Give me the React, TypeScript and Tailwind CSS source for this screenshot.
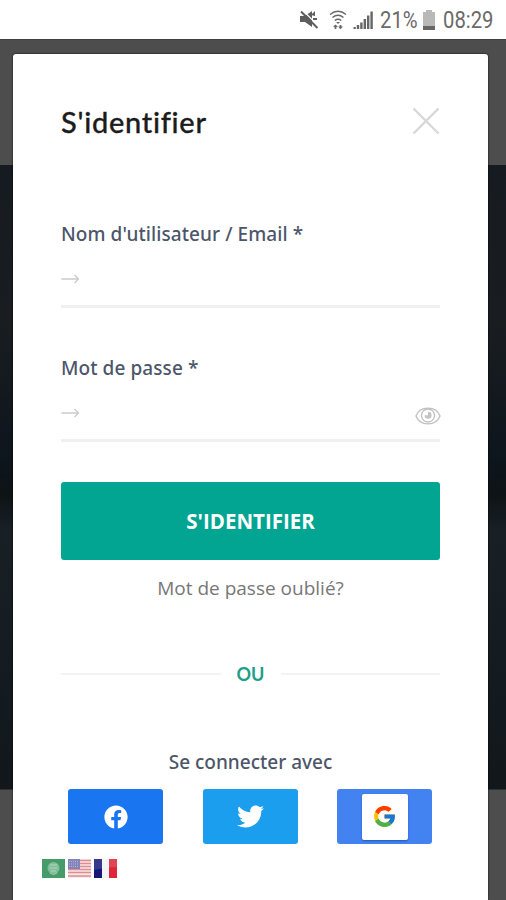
import type { ReactNode } from 'react'
import { FaFacebook, FaTwitter } from 'react-icons/fa'
import { FcGoogle } from 'react-icons/fc'

function StatusBar() {
  return (
    <header className="flex h-[39px] shrink-0 items-center justify-end bg-white pr-[11px] text-[#6a6a6a]">
      <svg width="20" height="20" viewBox="0 0 20 20" className="mr-[10px]" fill="#5e5e5e">
        <path d="M1 6h5l7-5v16l-7-5H1z" />
        <path d="M12 5l4-4v5zM14 8h4v2h-4z" />
        <path d="M4 0.500l16 16" stroke="#fff" strokeWidth="1.2" />
        <path d="M2 1.500l16.500 16.500" stroke="#5e5e5e" strokeWidth="2" />
      </svg>
      <svg width="18" height="20" viewBox="0 0 18 20" className="mr-[6px]" fill="none" stroke="#686868" strokeWidth="1.5">
        <path d="M1 4.500q8-6.500 16 0M3.500 7.500q5.500-4.500 11 0M5.800 10.500q3.200-2.600 6.400 0" />
        <path d="M7 12h4l-2 2z" fill="#686868" stroke="none" />
        <path d="M6.500 19v-3.500M11.500 15v3.500" strokeWidth="1.8" />
        <path d="M4 17l2.500-2.500L9 17zM9 16.500l2.500 2.500 2.500-2.500z" fill="#686868" stroke="none" />
      </svg>
      <svg width="20" height="20" viewBox="0 0 20 20" className="mr-[7px]" fill="#666">
        <path d="M0.500 17h2.300v2H0.500zM3.800 15h2.400v4H3.800zM7.200 12.500h2.400V19H7.200zM10.600 9h2.400v10h-2.400zM14 5.500h2.400V19H14zM17.400 1.500h2.400V19h-2.400z" />
      </svg>
      <span className="w-[38px] origin-left scale-x-[0.88] whitespace-nowrap pt-[2px] font-[Roboto,sans-serif] text-[23px] leading-none">21%</span>
      <svg width="12" height="20" viewBox="0 0 12 20" className="ml-[5px] mr-[8px]">
        <path d="M3 0h6v2h3v18H0V2h3z" fill="#b9b9b9" />
        <path d="M0 16h12v4H0z" fill="#666" />
      </svg>
      <span className="w-[52px] origin-left scale-x-[0.88] whitespace-nowrap pt-[2px] font-[Roboto,sans-serif] text-[23px] leading-none">08:29</span>
    </header>
  )
}

function ArrowIcon() {
  return (
    <svg width="19" height="12" viewBox="0 0 19 12" fill="none" stroke="#cbcbcb" strokeWidth="1.3">
      <path d="M0.500 6h17M13.500 2l4 4-4 4" />
    </svg>
  )
}

function EyeIcon() {
  return (
    <svg width="26" height="18" viewBox="0 0 26 18" className="-mr-px mt-[6px]" fill="none" stroke="#c0c0c0" strokeWidth="1.3">
      <path d="M1 9C5-1.500 21-1.500 25 9 21 19.500 5 19.500 1 9z" />
      <circle cx="13" cy="8.500" r="6.500" />
      <path d="M13 4.800v3.400h-3.400a3.500 3.500 0 1 0 3.400-3.400z" fill="#c4c4c4" stroke="none" />
    </svg>
  )
}

function Field({ label, children }: { label: string; children?: ReactNode }) {
  return (
    <div className="h-[134px]">
      <label className="block h-7 whitespace-nowrap font-['Noto_Sans',sans-serif] text-[19px] font-medium leading-7 tracking-[0.08px] text-[#4c566a]">
        {label}
      </label>
      <div className="flex h-[60px] items-center justify-between border-b-[3px] border-[#f0f0f0] pt-1">
        <ArrowIcon />
        {children}
      </div>
    </div>
  )
}

function Flags() {
  return (
    <div className="-ml-[19px] mt-[15px] flex gap-[3px]">
      <svg width="23" height="19" viewBox="0 0 23 19">
        <path d="M0 0h23v19H0z" fill="#459b6a" />
        <circle cx="11.500" cy="9" r="6" fill="#82bd99" />
        <path d="M8 6h7M7.500 9h8M9 12h5" stroke="#b2d6bf" />
        <path d="M8 14q3.500 3 7 0" stroke="#a5ceb4" fill="none" />
      </svg>
      <svg width="23" height="19" viewBox="0 0 23 19">
        <path d="M0 0h23v19H0z" fill="#f5e8e8" />
        <path d="M0 1.500h23M0 4.500h23M0 7.500h23M0 10.500h23M0 13.500h23M0 17h23" stroke="#e08c90" strokeWidth="1.600" />
        <path d="M0 0h12v10H0z" fill="#8383b9" />
        <path d="M1 2.500h10M1 5h10M1 7.500h10" stroke="#b5b5d8" strokeDasharray="1 1" />
      </svg>
      <svg width="23" height="19" viewBox="0 0 23 19">
        <path d="M0 0h8v19H0z" fill="#17177a" />
        <path d="M8 0h7v19H8z" fill="#f3f3f6" />
        <path d="M15 0h8v19h-8z" fill="#df2638" />
        <path d="M0 0h23v8q-12 0-23 3z" fill="#fff" opacity=".14" />
      </svg>
    </div>
  )
}

export default function App() {
  return (
    <div className="flex h-[900px] w-[506px] flex-col overflow-hidden bg-white">
      <StatusBar />
      <div className="flex-1 border-t border-[#3f3f3f] bg-[linear-gradient(#4d4d4d_125px,#161b21_125px,#191d20_285px,#0d151d_420px,#0e1315_455px,#182026_490px,#11171b_749px,#4d4d4d_750px)] px-[13px] pt-[14px]">
        <main className="h-[846px] w-[475px] rounded-t-[3px] bg-white px-12 pt-[49px] shadow-[0_0_2px_#000]">
          <div className="flex h-9 items-center justify-between">
            <h1 className="whitespace-nowrap pt-0.5 font-[Lato,sans-serif] text-[29px] font-medium tracking-[0.7px] text-[#1c1c1c] [-webkit-text-stroke:0.3px_#1c1c1c] [font-variant-ligatures:none]">
              S'identifier
            </h1>
            <svg width="28" height="28" viewBox="0 0 28 28" fill="none" stroke="#d8d8d8" strokeWidth="2.400">
              <path d="M1.500 1.500l25 25M26.500 1.500l-25 25" />
            </svg>
          </div>

          <form className="mt-[81px]">
            <Field label="Nom d'utilisateur / Email *" />
            <Field label="Mot de passe *">
              <EyeIcon />
            </Field>
            <button type="button" className="-mt-[6px] block h-[78px] w-full rounded-[3px] bg-[#02a591] font-['Open_Sans',sans-serif] text-[20.500px] font-bold text-white">
              S'IDENTIFIER
            </button>
          </form>

          <p className="mt-[14px] whitespace-nowrap text-center font-['Open_Sans',sans-serif] text-[19px] leading-7 text-[#777]">Mot de passe oublié?</p>

          <div className="mt-[58px] flex h-7 items-center">
            <span className="h-[2px] flex-1 bg-[#f3f3f3]" />
            <span className="w-[60px] pt-px text-center font-[Lato,sans-serif] text-[18px] font-bold text-[#1d9e87]">OU</span>
            <span className="h-[2px] flex-1 bg-[#f3f3f3]" />
          </div>

          <p className="mt-[60px] whitespace-nowrap text-center font-['Noto_Sans',sans-serif] text-[19px] font-medium leading-7 text-[#4c566a]">Se connecter avec</p>
          <div className="ml-[7px] mr-2 mt-[13px] flex justify-between">
            <div className="flex h-[55px] w-[95px] items-center justify-center rounded-[3px] bg-[#1976f0] text-white">
              <FaFacebook size={24} />
            </div>
            <div className="flex h-[55px] w-[95px] items-center justify-center rounded-[3px] bg-[#1c9eef] text-white">
              <FaTwitter size={27} />
            </div>
            <div className="flex h-[55px] w-[95px] items-center justify-center rounded-[3px] bg-[#4383f1]">
              <div className="flex h-[46px] w-[46px] items-center justify-center rounded-[2px] bg-white shadow-[0_1px_2px_#2459b0]">
                <FcGoogle size={25} />
              </div>
            </div>
          </div>
          <Flags />
        </main>
      </div>
    </div>
  )
}
